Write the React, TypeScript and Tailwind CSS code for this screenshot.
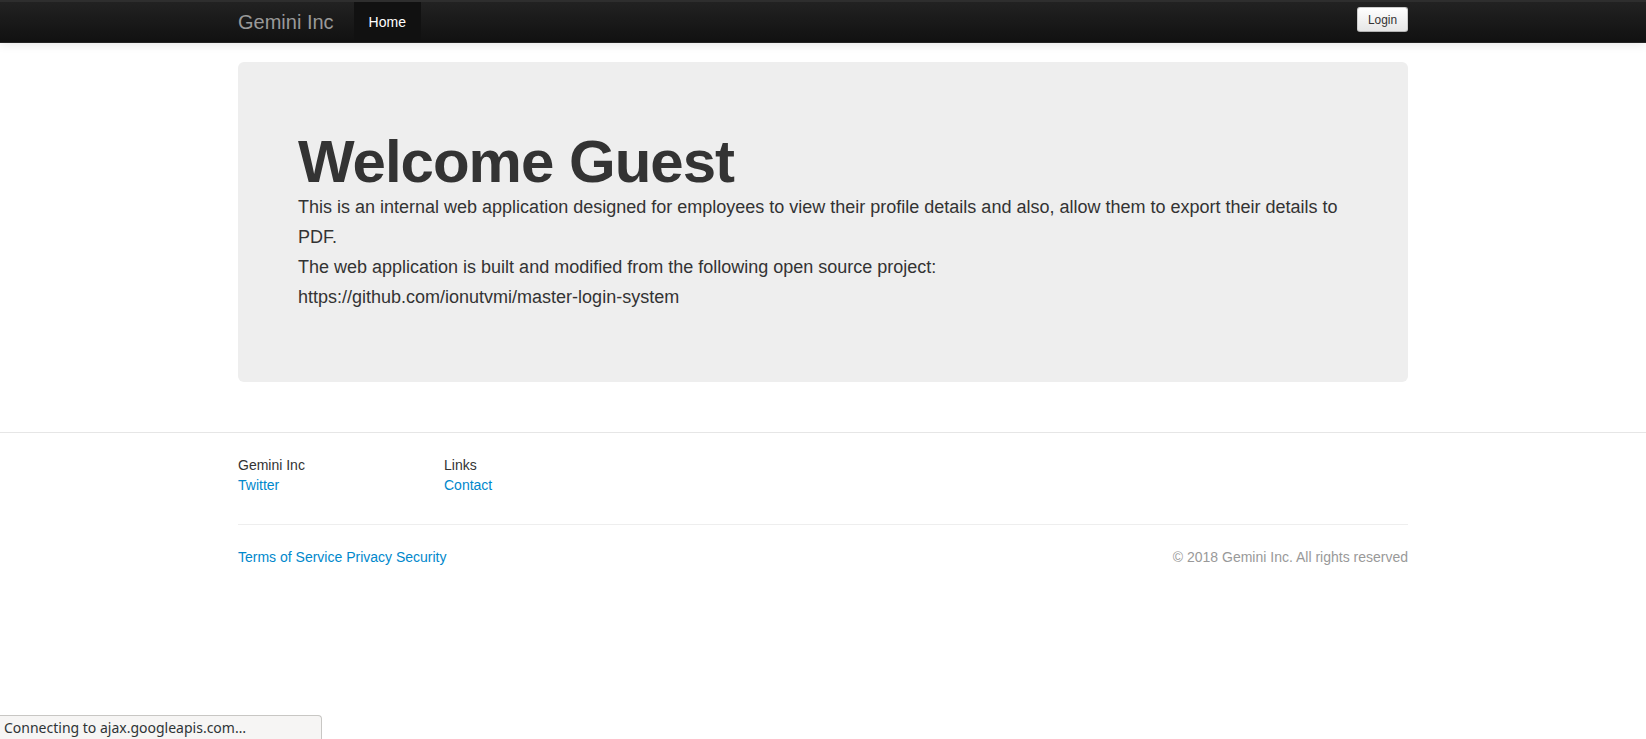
import React from "react";

const App = () => {
  return (
    <div className="min-h-screen bg-white font-['Liberation_Sans',Arial,sans-serif] text-[14px] leading-[20px] text-[#333333]">
      {/* navbar */}
      <div className="mb-[19px] h-[43px] border-t-2 border-b border-t-[#2e2e2e] border-b-[#252525] bg-linear-to-b from-[#222222] to-[#111111] shadow-[0_1px_10px_rgba(0,0,0,0.1)]">
        <div className="mx-auto flex h-10 w-[1170px] items-start">
          <a href="#" className="-ml-5 block px-5 py-2.5 text-[20px] leading-5 text-[#999999]">
            Gemini Inc
          </a>
          <ul className="flex">
            <li>
              <a href="#" className="block bg-[#111111] px-[15px] py-2.5 text-white">
                Home
              </a>
            </li>
          </ul>
          <button className="ml-auto mt-[5px] h-[25px] rounded-[3px] border border-[#cccccc] border-b-[#b3b3b3] bg-linear-to-b from-white to-[#e6e6e6] px-[10px] text-[11.9px] leading-[20px] text-[#333333] shadow-[inset_0_1px_0_rgba(255,255,255,0.2),0_1px_2px_rgba(0,0,0,0.05)]">
            Login
          </button>
        </div>
      </div>

      {/* hero */}
      <div className="mx-auto w-[1170px]">
        <div className="rounded-[6px] bg-[#eeeeee] p-[60px]">
          <h1 className="mt-[10px] text-[60px] font-bold leading-[60px] tracking-[-1px]">
            Welcome Guest
          </h1>
          <p className="mb-[10px] text-[18px] font-extralight leading-[30px]">
            This is an internal web application designed for employees to view their profile
            details and also, allow them to export their details to PDF.
            <br />
            The web application is built and modified from the following open source project:
            <br />
            https://github.com/ionutvmi/master-login-system
          </p>
        </div>
      </div>

      {/* footer */}
      <footer className="mt-[50px] border-t border-[#e6e6e6] pt-[22px]">
        <div className="mx-auto w-[1170px]">
          <div className="flex">
            <div className="w-[206px]">
              <p>Gemini Inc</p>
              <a href="#" className="text-[#0088cc]">
                Twitter
              </a>
            </div>
            <div>
              <p>Links</p>
              <a href="#" className="text-[#0088cc]">
                Contact
              </a>
            </div>
          </div>
          <div className="mt-[29px] border-t border-[#eeeeee] pt-[22px]">
            <div className="flex justify-between">
              <div className="text-[#0088cc]">
                <a href="#">Terms of Service</a> <a href="#">Privacy</a> <a href="#">Security</a>
              </div>
              <p className="text-[#999999]">© 2018 Gemini Inc. All rights reserved</p>
            </div>
          </div>
        </div>
      </footer>

      {/* browser status bubble */}
      <div className="fixed bottom-0 left-0 flex h-[24px] w-[322px] items-center rounded-tr-[4px] border-t border-r border-[#c8c7c4] bg-[#f6f5f4] pl-[4px] font-['Noto_Sans',sans-serif] text-[14px] text-[#2e3436]">
        Connecting to ajax.googleapis.com…
      </div>
    </div>
  );
};

export default App;
